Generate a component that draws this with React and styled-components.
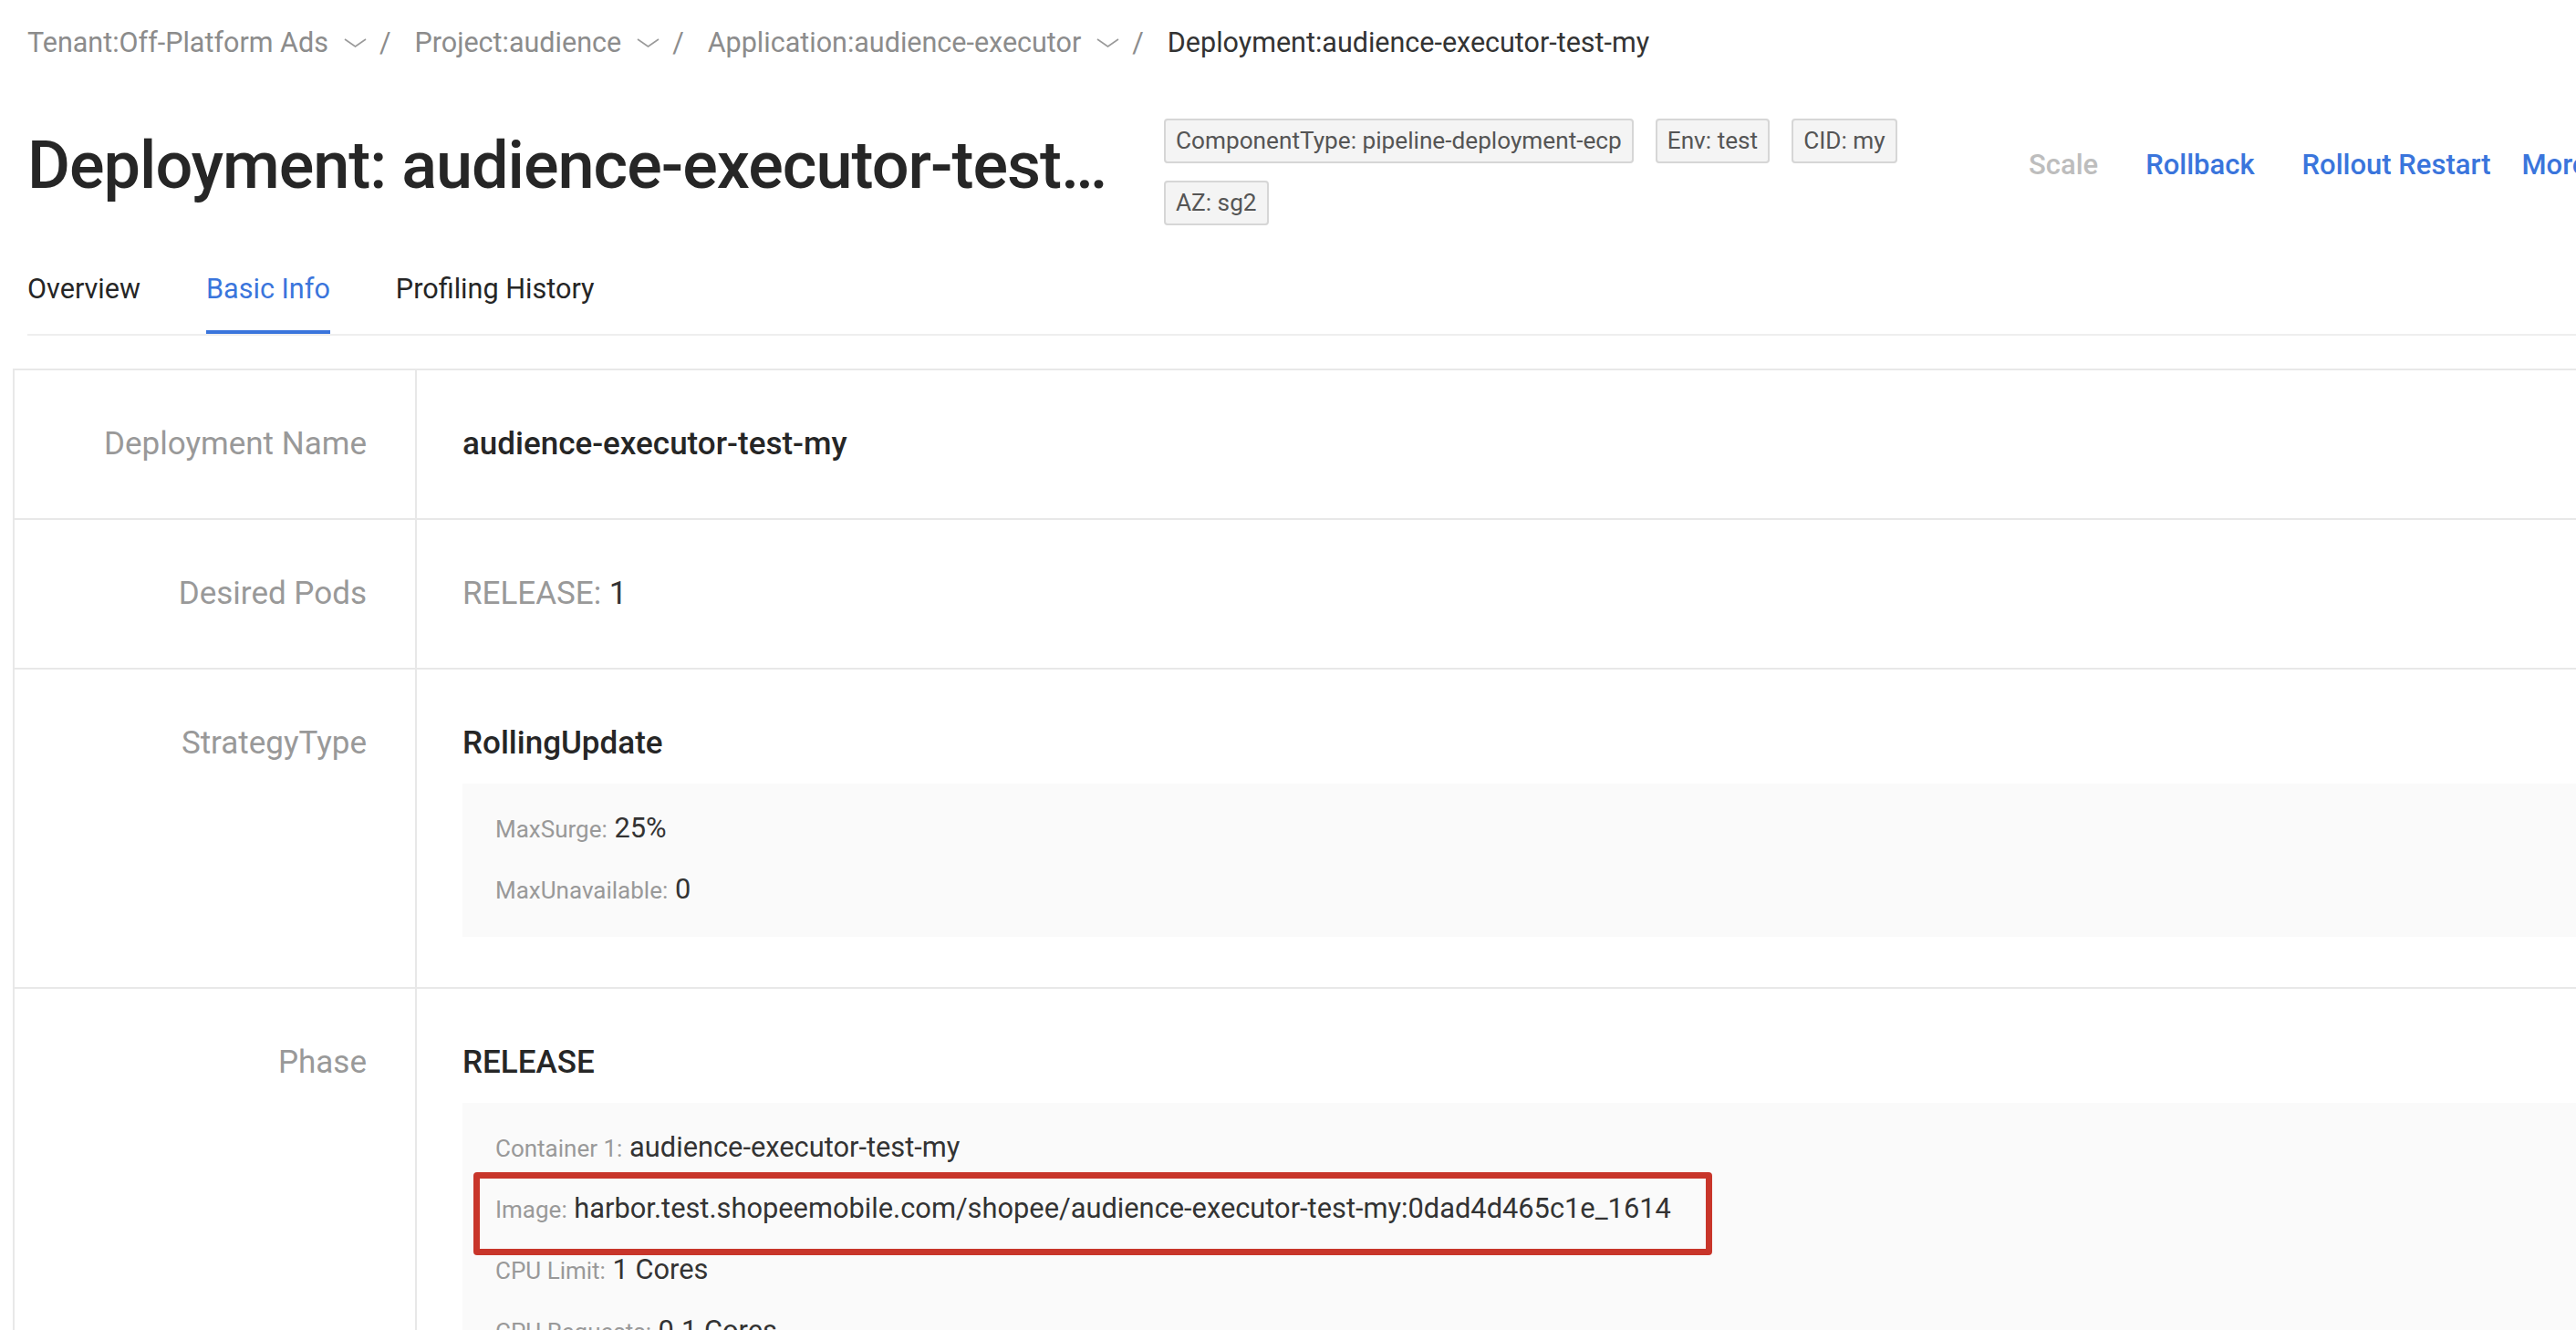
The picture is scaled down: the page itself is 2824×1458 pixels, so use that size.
import React from 'react'
import styled, { createGlobalStyle } from 'styled-components'

const GlobalStyle = createGlobalStyle`
  html, body {
    margin: 0;
    padding: 0;
    overflow: hidden;
    background: #fff;
  }
  body {
    font-family: Roboto, "Liberation Sans", sans-serif;
  }
`

const Page = styled.div`
  width: 2824px;
  min-height: 1458px;
`

const Top = styled.div`
  padding: 25px 0 0 30px;
`

const Breadcrumb = styled.div`
  display: flex;
  align-items: center;
  font-size: 30.5px;
  line-height: 44px;
  color: #8c8c8c;
  white-space: nowrap;
`

const Crumb = styled.span`
  color: ${(p) => (p.$current ? '#333333' : '#8c8c8c')};
`

const Chevron = styled.svg`
  margin-left: 17px;
  width: 25px;
  height: 10px;
`

const Sep = styled.span`
  margin: 0 26px 0 14px;
  color: #8c8c8c;
`

const HeaderRow = styled.div`
  display: flex;
  align-items: flex-start;
  margin-top: 61px;
`

const Title = styled.h1`
  margin: 9px 58px 0 0;
  width: 1188px;
  flex-shrink: 0;
  font-size: 72px;
  line-height: 86px;
  font-weight: 500;
  letter-spacing: -1px;
  color: #262626;
  white-space: nowrap;
  overflow: hidden;
  text-overflow: ellipsis;
`

const TagGroup = styled.div`
  width: 840px;
  flex-shrink: 0;
  display: flex;
  flex-wrap: wrap;
  gap: 19px 24px;
`

const Tag = styled.span`
  box-sizing: border-box;
  height: 49px;
  padding: 0 11px;
  border: 2px solid #d6d6d6;
  border-radius: 4px;
  background: #f4f4f4;
  font-size: 26.2px;
  line-height: 45px;
  color: #555;
  white-space: nowrap;
`

const Actions = styled.div`
  display: flex;
  flex-shrink: 0;
  margin: 29px 0 0 108px;
  white-space: nowrap;
`

const Action = styled.span`
  margin-left: ${(p) => p.$gap || 0}px;
  font-size: 31px;
  line-height: 44px;
  font-weight: 500;
  color: ${(p) => (p.$disabled ? '#bdbdbd' : '#3a75dc')};
  cursor: ${(p) => (p.$disabled ? 'not-allowed' : 'pointer')};
`

const TabBar = styled.div`
  display: flex;
  gap: 72px;
  margin-top: 48px;
  border-bottom: 2px solid #eeeeee;
`

const Tab = styled.div`
  padding-bottom: 23px;
  font-size: 30.6px;
  line-height: 44px;
  color: ${(p) => (p.$active ? '#3a75dc' : '#262626')};
  border-bottom: 4px solid ${(p) => (p.$active ? '#3a75dc' : 'transparent')};
`

const Table = styled.div`
  margin: 36px 0 0 14px;
  width: 2900px;
  border-top: 2px solid #e8e8e8;
  border-left: 2px solid #e8e8e8;
`

const Row = styled.div`
  display: grid;
  grid-template-columns: 441px 1fr;
  border-bottom: 2px solid #e8e8e8;
`

const Label = styled.div`
  box-sizing: border-box;
  padding: 55px 53px 55px 0;
  text-align: right;
  border-right: 2px solid #e8e8e8;
  font-size: 35px;
  line-height: 52px;
  color: #999;
`

const Value = styled.div`
  padding: 55px 0 55px 50px;
  font-size: 35px;
  line-height: 52px;
  color: #333;
`

const Strong = styled.div`
  font-weight: 500;
  color: #262626;
`

const Muted = styled.span`
  color: #999;
`

const SubPanel = styled.div`
  margin-top: 18px;
  padding: 16px 36px 18px;
  background: #fafafa;
`

const SubItem = styled.div`
  position: relative;
  font-size: 30.8px;
  line-height: 66px;
  color: #333;
  white-space: nowrap;
`

const SubLabel = styled.span`
  font-size: 26px;
  color: #999;
`

const Highlight = styled.div`
  position: absolute;
  top: -7px;
  left: -24px;
  width: 1358px;
  height: 91px;
  box-sizing: border-box;
  border: 7px solid #c8352a;
  border-radius: 4px;
  pointer-events: none;
`

const crumbs = [
  'Tenant:Off-Platform Ads',
  'Project:audience',
  'Application:audience-executor',
]

const tags = ['ComponentType: pipeline-deployment-ecp', 'Env: test', 'CID: my', 'AZ: sg2']

const DownIcon = () => (
  <Chevron viewBox="0 0 25 10">
    <polyline points="1,1 12.5,9 24,1" fill="none" stroke="#9a9a9a" strokeWidth="1.6" />
  </Chevron>
)

const App = () => {
  return (
    <Page>
      <GlobalStyle />
      <Top>
        <Breadcrumb>
          {crumbs.map((c) => (
            <React.Fragment key={c}>
              <Crumb>{c}</Crumb>
              <DownIcon />
              <Sep>/</Sep>
            </React.Fragment>
          ))}
          <Crumb $current>Deployment:audience-executor-test-my</Crumb>
        </Breadcrumb>

        <HeaderRow>
          <Title>Deployment: audience-executor-test-my</Title>
          <TagGroup>
            {tags.map((t) => (
              <Tag key={t}>{t}</Tag>
            ))}
          </TagGroup>
          <Actions>
            <Action $disabled>Scale</Action>
            <Action $gap={52}>Rollback</Action>
            <Action $gap={52}>Rollout Restart</Action>
            <Action $gap={34}>More</Action>
          </Actions>
        </HeaderRow>

        <TabBar>
          <Tab>Overview</Tab>
          <Tab $active>Basic Info</Tab>
          <Tab>Profiling History</Tab>
        </TabBar>
      </Top>

      <Table>
        <Row>
          <Label>Deployment Name</Label>
          <Value>
            <Strong>audience-executor-test-my</Strong>
          </Value>
        </Row>
        <Row>
          <Label>Desired Pods</Label>
          <Value>
            <Muted>RELEASE:</Muted> 1
          </Value>
        </Row>
        <Row>
          <Label>StrategyType</Label>
          <Value>
            <Strong>RollingUpdate</Strong>
            <SubPanel>
              <SubItem>
                <SubLabel>MaxSurge:</SubLabel> 25%
              </SubItem>
              <SubItem>
                <SubLabel>MaxUnavailable:</SubLabel> 0
              </SubItem>
            </SubPanel>
          </Value>
        </Row>
        <Row>
          <Label>Phase</Label>
          <Value>
            <Strong>RELEASE</Strong>
            <SubPanel>
              <SubItem>
                <SubLabel>Container 1:</SubLabel> audience-executor-test-my
              </SubItem>
              <SubItem>
                <SubLabel>Image:</SubLabel> harbor.test.shopeemobile.com/shopee/audience-executor-test-my:0dad4d465c1e_1614
                <Highlight />
              </SubItem>
              <SubItem>
                <SubLabel>CPU Limit:</SubLabel> 1 Cores
              </SubItem>
              <SubItem>
                <SubLabel>CPU Requests:</SubLabel> 0.1 Cores
              </SubItem>
              <SubItem>
                <SubLabel>Memory Limit:</SubLabel> 1 Gi
              </SubItem>
            </SubPanel>
          </Value>
        </Row>
      </Table>
    </Page>
  )
}

export default App
